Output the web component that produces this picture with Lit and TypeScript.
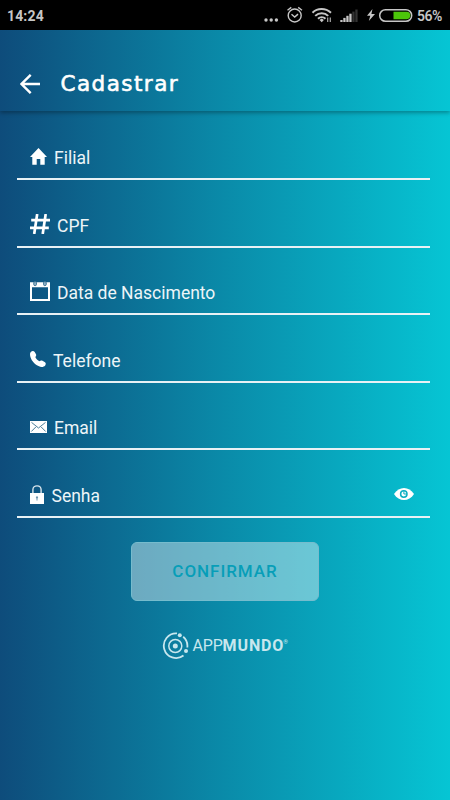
import { LitElement, html, css, svg } from "lit";
import { customElement } from "lit/decorators.js";

const home = html`<svg width="17" height="17" viewBox="0 0 17 17" fill="#fff"><path d="M8.5 0 L17 9 H14.7 V16.8 H10.3 V11 H6.7 V16.8 H2.3 V9 H0 Z"/></svg>`;
const hash = html`<svg width="20" height="20" viewBox="0 0 20 20" fill="none" stroke="#fff" stroke-width="2.7"><path d="M7.2 0 L4.2 20 M15.7 0 L12.7 20 M1.2 6.2 H20 M0 13.8 H18.8"/></svg>`;
const calendar = html`<svg width="20" height="20" viewBox="0 0 20 20" fill="none"><path d="M0 1.3H20V20H0Z M2 6.300V18H18V6.300Z" fill="#fff" fill-rule="evenodd"/><rect x="3.700" y=".5" width="2.800" height="4.200" rx="1.400" fill="#8fb0c4" stroke="#2d6a8d" stroke-width=".8"/><rect x="13.500" y=".5" width="2.800" height="4.200" rx="1.400" fill="#8fb0c4" stroke="#2d6a8d" stroke-width=".8"/></svg>`;
const phone = html`<svg width="16" height="16" viewBox="0 0 16 16" fill="#fff"><path d="M1.100 .7C2.100-.2 4-.1 4.700 1L6 3.300C6.500 4.400 6 5.200 5.300 5.900C5.900 7.400 7.700 9.300 9.600 10.300C10.400 9.300 11.400 9.200 12.500 9.800L15 11.300C16.100 12.100 15.900 13.500 15.200 14.400C13.600 16.200 11 16.300 8.500 15C4.200 13 .6 8.500 .1 4.400C-.1 2.800 .1 1.500 1.100 .7Z"/></svg>`;
const mail = html`<svg width="17" height="12" viewBox="0 0 17 12"><rect width="17" height="12" fill="#fff"/><path d="M1.500 1.400L8.500 7L15.500 1.400M1.300 10.500L5.800 6M15.700 10.500L11.200 6" fill="none" stroke="#38718f" stroke-width=".9"/></svg>`;
const lock = html`<svg width="14" height="19" viewBox="0 0 14 19"><path d="M2.900 8V4.800C2.900-.5 11.100-.5 11.100 4.800V8" fill="none" stroke="#d9e5ec" stroke-width="1.400"/><path d="M0 8H14V19H0Z" fill="#fff"/><path d="M7 11.200a1.300 1.300 0 0 1 .5 2.400V15.500H6.500V13.600A1.300 1.300 0 0 1 7 11.200Z" fill="#6d96ae"/></svg>`;
const eye = html`<svg class="eye" width="20" height="12" viewBox="0 0 20 12"><path d="M0 6C5-2 15-2 20 6C15 14 5 14 0 6Z" fill="#fff"/><circle cx="9.800" cy="6" r="3.200" fill="#fff" stroke="#0bafc2" stroke-width="1.500"/><path d="M9.900 3.200V6H12.600" fill="none" stroke="#0bafc2" stroke-width="1"/></svg>`;

const fields = [
  { icon: home, label: "Filial", gap: 7, top: -0.5 },
  { icon: hash, label: "CPF", gap: 7, top: -1 },
  { icon: calendar, label: "Data de Nascimento", gap: 7, top: -1 },
  { icon: phone, label: "Telefone", gap: 7, top: -1 },
  { icon: mail, label: "Email", gap: 7, top: -0.5 },
  { icon: lock, label: "Senha", gap: 7.5, top: -0.5, trailing: eye },
];

@customElement("app-status")
class AppStatus extends LitElement {
  static styles = css`
    :host { display: flex; align-items: center; justify-content: space-between; height: 30px; box-sizing: border-box;
      padding: 1px 8px 0 7px; background: #000; color: #c6c6c6; font: 700 14px/30px Roboto, sans-serif; }
    .time { letter-spacing: .15px; }
    .right { display: flex; align-items: center; }
    .percent { font-weight: 600; font-size: 14px; letter-spacing: -.5px; width: 25px; white-space: nowrap; }
    svg { display: block; }
  `;
  render() {
    const bars = [0, 1, 2, 3, 4, 5];
    return html`<span class="time">14:24</span>
      <div class="right">
        <svg width="154" height="30" viewBox="263 1 154 30">
          <g fill="#c6c6c6"><circle cx="266" cy="20" r="1.700"/><circle cx="271.200" cy="20" r="1.700"/><circle cx="276.400" cy="20" r="1.700"/></g>
          <g fill="none" stroke="#c6c6c6" stroke-width="1.400">
            <circle cx="294.700" cy="15.500" r="6.500"/>
            <path d="M291.500 14.300L294.700 17L298 14.100M287.500 10.200L291.300 7.400M298.200 7.400L302 10.200"/>
          </g>
          <g fill="none" stroke="#c6c6c6" stroke-width="2">
            <path d="M312.500 12.700C317.500 7.900 325.500 7.900 331 12.700M315.200 15.900C319 12.200 324.500 12.200 328.200 15.900M318 18.700C320.200 16.600 323.300 16.600 325.500 18.700"/>
          </g>
          <path d="M319.500 20L321.700 18.600L323.900 20L321.700 22.300Z" fill="#c6c6c6"/>
          <path d="M327.700 17.500V22M330.300 17.500V22" stroke="#a8a8a8" stroke-width="1.200"/>
          ${bars.map((i) => svg`<rect x=${340.3 + i * 3} y=${20 - i * 2.1} width="2.300" height=${2 + i * 2.1} fill=${i < 4 ? "#c6c6c6" : "#333"} />`)}
          <path d="M372.500 9L367 15.700H370.300L368.800 21L375 14H371.400Z" fill="#c6c6c6"/>
          <rect x="379.700" y="9.700" width="32" height="11.600" rx="5.800" fill="none" stroke="#c6c6c6" stroke-width="1.500"/>
          <path d="M393.500 11.800H407C411.500 11.800 411.500 19.200 407 19.200H393.500Z" fill="#4cc60a"/>
        </svg>
        <span class="percent">56%</span>
      </div>`;
  }
}

@customElement("app-root")
class AppRoot extends LitElement {
  static styles = css`
    :host { display: flex; flex-direction: column; width: 450px; height: 800px; overflow: hidden; box-sizing: border-box;
      color: #fff; font-family: Roboto, sans-serif;
      background: linear-gradient(90deg, #0e4c7b 0, #0a8ba9 50%, #06c5d4 100%); }
    svg { display: block; flex: none; }
    header { display: flex; align-items: center; flex: none; height: 81px; box-sizing: border-box; padding: 26px 20px 0;
      box-shadow: 0 2px 4px rgba(0, 0, 0, .3); }
    h1 { margin: 0 0 0 20.5px; font: 400 21.5px/28px "DejaVu Sans", sans-serif; letter-spacing: 1.450px; -webkit-text-stroke: .6px #fff; }
    form { display: flex; flex-direction: column; padding: 1.6px 20px 0 17px; }
    .field { display: flex; align-items: center; height: 67.5px; box-sizing: border-box; padding: 24px 16px 0 13px;
      border-bottom: 2px solid #e8f1f5; font-size: 17.5px; line-height: 22px; }
    .label { flex: 1; color: #edf5f8; padding-top: 1.800px; }
    .eye { margin: -1px 0 0; }
    button { align-self: center; flex: none; width: 188px; height: 59px; margin-top: 24.400px; border: 1px solid #76bccd;
      border-radius: 6px; background: rgba(255, 255, 255, .4); color: #079eb8; font: 500 17px Roboto, sans-serif; letter-spacing: .95px; padding: 0; }
    .brand { display: flex; align-items: center; margin: 31.300px 0 0 161.500px; color: #c8e7ee; }
    .name { display: flex; margin: -1px 0 0 4px; font: 400 16px/20px Roboto, sans-serif; letter-spacing: -.2px; white-space: nowrap; }
    .name b { font-weight: 700; letter-spacing: .9px; }
    .mark { font-size: 6px; line-height: 12px; margin-left: -1px; }
  `;
  render() {
    return html`<app-status></app-status>
      <header>
        <svg width="20" height="20" viewBox="0 0 20 20" fill="none" stroke="#fff" stroke-width="2.400"><path d="M10.700 .8L1.500 10L10.700 19.200M1.500 10H20"/></svg>
        <h1>Cadastrar</h1>
      </header>
      <form>
        ${fields.map((f) => html`<div class="field">
          <span style="margin: ${f.top * 2}px ${f.gap}px 0 0">${f.icon}</span><span class="label">${f.label}</span>${f.trailing ?? ""}
        </div>`)}
      </form>
      <button type="button">CONFIRMAR</button>
      <div class="brand">
        <svg width="27" height="28" viewBox="0 0 27 28" fill="none" stroke="#c8e7ee">
          <path d="M15 1.400A12.300 12.300 0 1 0 21.500 23.500M21.200 4.700A12.300 12.300 0 0 1 25.300 15.500" stroke-width="1.800"/>
          <circle cx="13.300" cy="14" r="6.500" stroke-width="1.500"/>
          <circle cx="13.300" cy="14" r="2.500" fill="#c8e7ee" stroke="none"/>
          <circle cx="17.800" cy="3.200" r="2" fill="#c8e7ee" stroke="none"/>
          <circle cx="24" cy="19" r="2" fill="#c8e7ee" stroke="none"/>
        </svg>
        <span class="name">APP<b>MUNDO</b><span class="mark">®</span></span>
      </div>`;
  }
}
